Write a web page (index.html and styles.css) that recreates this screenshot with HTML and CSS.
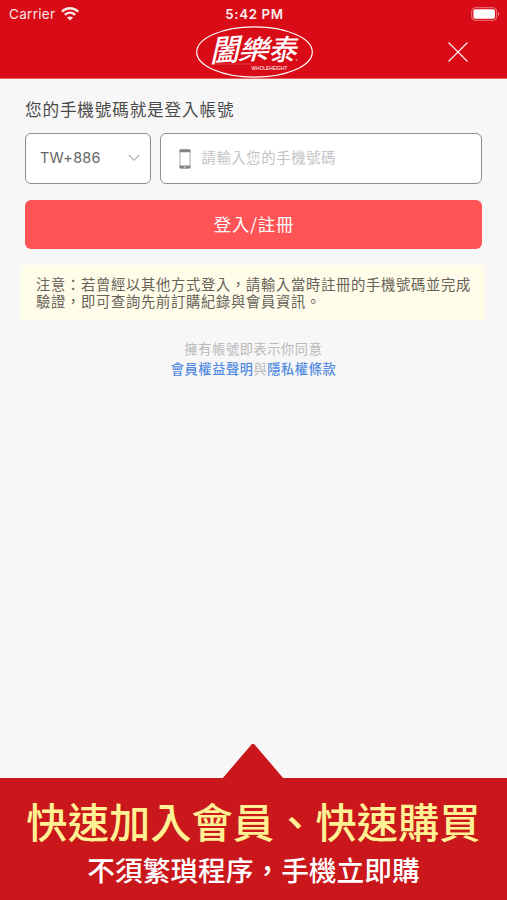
FILE: index.html
```html
<!DOCTYPE html>
<html lang="zh-Hant">
<head>
<meta charset="utf-8">
<title>登入/註冊</title>
<link rel="stylesheet" href="styles.css">
</head>
<body>
<div class="screen">
  <header class="header">
    <div class="status">
      <div class="carrier"><span>Carrier</span>
        <svg width="18" height="14" viewBox="0 0 18 14" fill="none" stroke="#fff" stroke-width="2.3"><path d="M.9 4.6C5.6.1 12.4.1 17.1 4.6M3.8 7.8c3.1-2.8 7.3-2.8 10.4 0"/><path d="M9 13.6 5.9 10.5c1.8-1.5 4.4-1.5 6.2 0z" fill="#fff" stroke="none"/></svg>
      </div>
      <span class="time">5:42 PM</span>
      <svg class="battery" width="29" height="14" viewBox="0 0 29 14"><rect x=".7" y=".7" width="25" height="12.6" rx="3.5" fill="none" stroke="#fff" stroke-opacity=".45"/><rect x="2.4" y="2.3" width="21.6" height="9.4" rx="1.8" fill="#fff"/><path d="M27 5v4c1.7-.7 1.7-3.3 0-4z" fill="#fff" fill-opacity=".5"/></svg>
    </div>
    <div class="nav">
      <svg class="logo" width="120" height="54" viewBox="0 0 120 54">
        <ellipse cx="60.5" cy="27" rx="57.8" ry="25.2" fill="none" stroke="#fff" stroke-width="1.2"/>
        <g class="brush" fill="#fff">
          <text transform="translate(16 37) rotate(-4) skewX(-17) scale(1.04 1.08)" font-size="28">闔</text>
          <text transform="translate(43.5 35) rotate(-3) skewX(-20) scale(1.16 .97)" font-size="27">樂</text>
          <text transform="translate(74.5 35) skewX(-12) scale(1.04 1.06)" font-size="27">泰</text>
        </g>
        <path d="M17 39H57" stroke="#fff" stroke-opacity=".45" stroke-width=".5"/>
        <circle cx="102.5" cy="35" r=".8" fill="#fff" fill-opacity=".7"/>
        <text class="latin" x="57.5" y="45" textLength="36" lengthAdjust="spacingAndGlyphs" fill="#fff">WHOLEHEIGHT</text>
      </svg>
      <svg class="close" width="20" height="20" viewBox="0 0 20 20" stroke="#fff" stroke-width="1.3" stroke-linecap="round"><path d="M.9.9 19.1 19.1M19.1.9.9 19.1"/></svg>
    </div>
  </header>
  <main class="main">
    <h1 class="title">您的手機號碼就是登入帳號</h1>
    <div class="fields">
      <div class="field country"><span>TW+886</span>
        <svg width="12" height="8" viewBox="0 0 12 8" fill="none" stroke="#b0b0b0" stroke-width="1.1"><path d="M.8 1 6 6.2 11.2 1"/></svg>
      </div>
      <div class="field phone">
        <svg width="12" height="20" viewBox="0 0 12 20"><rect x="1" y="1" width="10" height="18" rx="1" fill="none" stroke="#aaa" stroke-width="1"/><path d="M1.5.3h9q1 0 1 1v2H.5v-2q0-1 1-1zM.5 16.6h11v2q0 1-1 1h-9q-1 0-1-1z" fill="#858585"/><path d="M5 18h2" stroke="#ddd" stroke-width="1"/></svg>
        <span>請輸入您的手機號碼</span>
      </div>
    </div>
    <div class="submit">登入/註冊</div>
    <div class="notice">注意：若曾經以其他方式登入，請輸入當時註冊的手機號碼並完成<br>驗證，即可查詢先前訂購紀錄與會員資訊。</div>
    <div class="terms">擁有帳號即表示你同意<br><a>會員權益聲明</a>與<a>隱私權條款</a></div>
  </main>
  <footer class="promo">
    <svg class="arrow" width="62" height="36" viewBox="0 0 62 36"><path d="M0 36 29.5 1.5Q31 0 32.5 1.5L62 36z" fill="#c9171c"/></svg>
    <div class="banner">
      <div class="big">快速加入會員、快速購買</div>
      <div class="small">不須繁瑣程序，手機立即購</div>
    </div>
  </footer>
</div>
</body>
</html>
```
FILE: styles.css
```css
* { box-sizing: border-box; }
body { margin: 0; font-family: "Noto Sans CJK TC", sans-serif; }
.screen { width: 507px; height: 900px; display: flex; flex-direction: column; background: #f7f7f7; overflow: hidden; }
.header { height: 79px; flex: none; background: #d90b17; color: #fff; border-bottom: 1px solid #e36369; }
.status { height: 25px; padding: 0 7px 0 9px; display: grid; grid-template-columns: 1fr auto 1fr; align-items: center; font-family: Inter, sans-serif; font-size: 13.5px; line-height: 25px; }
.carrier { display: flex; align-items: center; gap: 6px; letter-spacing: .3px; opacity: .9; padding-top: 2px; }
.carrier svg { margin-top: -2px; }
.time { font-weight: 600; font-size: 13.3px; letter-spacing: .65px; opacity: .93; padding-top: 2px; }
.battery { justify-self: end; margin-top: 1px; }
.nav { height: 54px; display: grid; grid-template-columns: 1fr auto 1fr; align-items: center; padding: 0 39px 0 40px; }
.logo { grid-column: 2; }
.close { justify-self: end; }
.brush { font-family: "Noto Sans CJK TC", sans-serif; font-weight: 500; }
.latin { font-family: "Liberation Sans", sans-serif; font-size: 5.4px; }
.main { flex: 1; padding: 18px 25px 0; }
.title { margin: 0; height: 24px; line-height: 24px; font-size: 16.6px; font-weight: 400; letter-spacing: .85px; color: #4a4a4a; }
.fields { margin-top: 12px; display: flex; gap: 9px; }
.field { height: 51px; border: 1px solid #8f8f8f; border-radius: 6px; background: #fff; display: flex; align-items: center; }
.country { width: 126px; justify-content: space-between; padding: 0 10px 1px 14px; font: 14.4px Inter, sans-serif; letter-spacing: .3px; color: #666; }
.country span { margin-top: -2px; }
.phone { flex: 1; padding: 0 18px; gap: 10.5px; font-size: 14.3px; letter-spacing: .65px; color: #c4c4c4; }
.phone span { margin-top: -4px; }
.submit { margin-top: 16px; height: 49px; line-height: 48px; border-radius: 6px; background: #ff5456; color: #fff; text-align: center; font-size: 17.3px; letter-spacing: .9px; padding-left: 1px; }
.notice { margin: 16px -3px 0 -4px; height: 55px; padding: 10px 0 0 15px; background: #fffce9; color: #666259; font-size: 14.3px; letter-spacing: .7px; line-height: 17px; white-space: nowrap; }
.terms { margin-top: 19px; text-align: center; color: #b9b9b9; font-size: 13.2px; letter-spacing: .6px; line-height: 19.5px; }
.terms a { color: #528be0; font-weight: 500; }
.promo { flex: none; }
.arrow { display: block; margin: 0 auto -1px 222px; }
.banner { height: 122px; padding-top: 14px; background: #c9171c; text-align: center; white-space: nowrap; }
.big { height: 57px; line-height: 57px; font-size: 41.3px; font-weight: 500; color: #fff194; }
.small { height: 40px; line-height: 40px; font-size: 27.7px; font-weight: 500; color: #fff; }
```
